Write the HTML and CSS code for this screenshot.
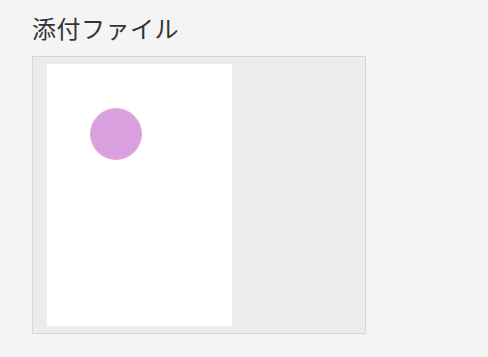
FILE: index.html
```html
<!DOCTYPE html>
<html lang="ja">
<head>
<meta charset="utf-8">
<link rel="stylesheet" href="styles.css">
</head>
<body>
<section class="attachments">
  <h1 class="title">添付ファイル</h1>
  <div class="viewer">
    <div class="page">
      <div class="dot"></div>
    </div>
  </div>
</section>
</body>
</html>
```
FILE: styles.css
```css
html, body {
  margin: 0;
  background: #f4f4f4;
}
body {
  font-family: "Noto Sans CJK JP", "Noto Sans", sans-serif;
  color: #333;
}
.attachments {
  padding: 10px 0 0 32px;
}
.title {
  margin: 0 0 10px 0;
  font-size: 24px;
  font-weight: 400;
  line-height: 36px;
  letter-spacing: 0.5px;
  color: #333;
}
.viewer {
  width: 318px;
  height: 262px;
  padding: 7px 0 7px 14px;
  box-sizing: content-box;
  background: #ececec;
  border: 1px solid #d6d6d6;
}
.page {
  width: 185px;
  height: 262px;
  background: #fff;
  padding: 44px 0 0 43px;
  box-sizing: border-box;
}
.dot {
  width: 52px;
  height: 52px;
  border-radius: 50%;
  background: #d8a0df;
  border: 1px solid #f2a8c8;
  box-sizing: border-box;
}
```
